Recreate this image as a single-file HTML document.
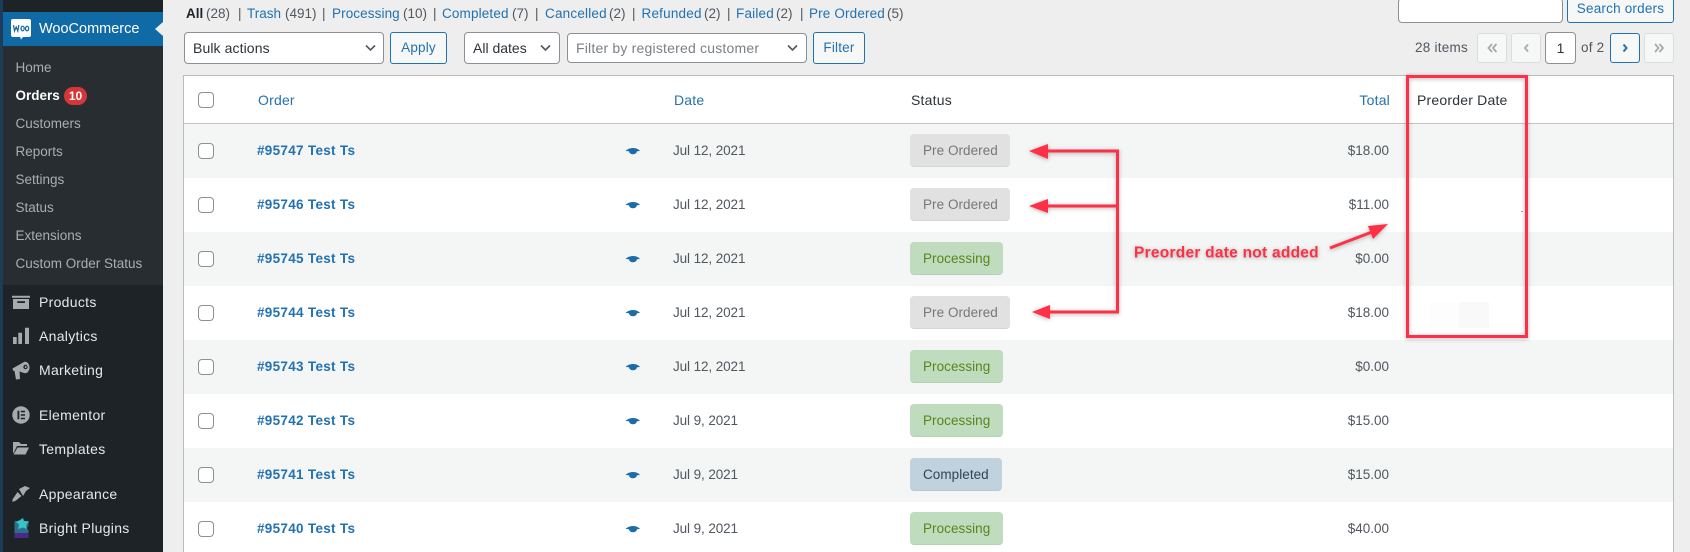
<!DOCTYPE html>
<html><head><meta charset="utf-8"><title>Orders</title>
<style>
html,body{margin:0;padding:0;width:1690px;height:552px;overflow:hidden;background:#eeeeee;font-family:"Liberation Sans",sans-serif;font-size:13.5px;color:#3c434a}
#p{position:relative;width:1690px;height:552px;overflow:hidden}
.a,.t,.r div,.r span,.r a,.r svg{position:absolute}
.a{position:absolute}
.t{position:absolute;line-height:20px;white-space:nowrap}
.l{color:#2271b1}
.g{color:#50575e}
.s{color:#a9aeb3;left:15.5px;position:absolute;line-height:20px;letter-spacing:0;white-space:nowrap}
.m{color:#e6e8e9;left:39px;position:absolute;line-height:20px;font-size:14px;letter-spacing:.3px;white-space:nowrap}
.r{position:absolute;left:184px;width:1489px;height:54px}
.r.o{background:#f4f5f5}.r.e{background:#fff}
.cb{left:14px;top:19px;width:14px;height:14px;border:1px solid #8c8f94;border-radius:4px;background:#fff}
.id{left:73px;top:17px;line-height:20px;font-weight:bold;color:#2271b1;letter-spacing:.3px;white-space:nowrap}
.d{left:489px;top:17px;line-height:20px;color:#50575e;letter-spacing:-.1px;white-space:nowrap}
.am{right:284px;top:17px;line-height:20px;color:#50575e;letter-spacing:0;white-space:nowrap}
.pill{left:726px;top:10px;height:33px;border-radius:4px;line-height:33px;padding-left:13px;box-sizing:border-box;white-space:nowrap;letter-spacing:.05px;border-bottom:1px solid rgba(0,0,0,.05)}
.pre{width:100px;background:#e1e1e1;color:#777}
.pro{width:93px;background:#c0dcbf;color:#5b841b}
.com{width:92px;background:#c0d2de;color:#2e4453}
.btn{position:absolute;box-sizing:border-box;border:1px solid #2271b1;border-radius:3px;background:#f6f7f7;color:#2271b1;text-align:center;letter-spacing:.2px}
.sel{position:absolute;box-sizing:border-box;border:1px solid #8c8f94;border-radius:4px;background:#fff;color:#2c3338;padding-left:8px;line-height:30px;font-size:14px;letter-spacing:.1px}
.pg{position:absolute;box-sizing:border-box;top:33px;height:30px;border:1px solid #dcdcde;border-radius:3px;background:#f6f7f7}
.h{top:90px;font-size:14px;letter-spacing:.2px}
</style></head><body><div id="p">

<div class="a" style="left:0;top:0;width:3px;height:552px;background:#1c3d5a"></div>
<div class="a" style="left:3px;top:0;width:160px;height:552px;background:#1d2327"></div>
<div class="a" style="left:3px;top:46px;width:160px;height:239px;background:#282d31"></div>
<div class="a" style="left:3px;top:12px;width:160px;height:34px;background:#0f6aa6"></div>
<div class="a" style="left:155px;top:22px;width:0;height:0;border-top:7.5px solid transparent;border-bottom:7.5px solid transparent;border-right:8px solid #eeeeee"></div>

<svg class="a" style="left:0;top:0" width="163" height="552" viewBox="0 0 163 552">
<path d="M13 19h16a2 2 0 0 1 2 2v14a2 2 0 0 1-2 2h-6l-2 2.500-.8-2.500H13a2 2 0 0 1-2-2V21a2 2 0 0 1 2-2z" fill="#fff"/>
<path d="M13.500 25l1 6 1.700-4 1.600 4 1-6M21 28.500a1.600 2.300 0 1 0 3.200 0a1.600 2.300 0 1 0-3.200 0M25.500 28.500a1.600 2.300 0 1 0 3.200 0a1.600 2.300 0 1 0-3.200 0" fill="none" stroke="#0f6aa6" stroke-width="1.200"/>
<path d="M12 295.700h18v2H12z" fill="#a7aaad"/><path d="M13 299h16v10H13z" fill="#a7aaad"/><path d="M17.300 301.200h7.700v1.800h-7.700z" fill="#1d2327"/>
<path d="M13 337h3.700v7H13zM18.300 332.700H22V344h-3.700zM25 327.700h4V344h-4z" fill="#a7aaad"/>
<path d="M12.500 368.500l11.500-6.500c3-1 5.500 2 5.500 5.500s-2.500 6.500-5.500 5.500l-4.500-1.500.5 7.500-4 .5-1.500-8.500-1.500-.5z" fill="#a7aaad"/><circle cx="25.500" cy="367" r="2.200" fill="#1d2327"/><circle cx="25.700" cy="367" r="1" fill="#a7aaad"/>
<circle cx="21" cy="415" r="8.700" fill="#a7aaad"/><path d="M17.500 410.700h1.800v8.600h-1.800zM20.800 410.700h4.200v1.600h-4.200zM20.800 414.200h4.200v1.600h-4.200zM20.800 417.700h4.200v1.600h-4.200z" fill="#1d2327"/>
<path d="M13 442h6l2 2h6v2H17l-3.500 7H13z" fill="#a7aaad"/><path d="M17.500 447.500H29l-3.500 7H13.500z" fill="#a7aaad"/>
<path d="M19 489l6-3 5 2-4 3-3 5z" fill="#a7aaad"/><path d="M17.500 492l4 4-5.500 4.500-3.500 1.500 0-2.500z" fill="#a7aaad"/>
<path d="M14.500 521h14v5l-2 2 2 2v7l-14 0z" fill="#2d6e8e"/><path d="M14.500 533h14v5h-14z" fill="#4b2a87"/><path d="M20 520l3-2 1 3 5 .5-3 3.500 1 4-4-1.500-5 1.500 1-4.500-3-2.500z" fill="#36c5c5"/>
</svg>

<div class="t" style="left:39px;top:19px;color:#fff;font-size:14.5px;letter-spacing:0">WooCommerce</div>
<div class="s" style="top:58px">Home</div>
<div class="s" style="top:86px;color:#fff;font-weight:bold;letter-spacing:0">Orders</div>
<div class="a" style="left:64px;top:87px;width:23px;height:18px;border-radius:9px;background:#d63638;color:#fff;font-size:12px;font-weight:bold;text-align:center;line-height:18px">10</div>
<div class="s" style="top:114px">Customers</div>
<div class="s" style="top:142px">Reports</div>
<div class="s" style="top:170px">Settings</div>
<div class="s" style="top:198px">Status</div>
<div class="s" style="top:226px">Extensions</div>
<div class="s" style="top:254px">Custom Order Status</div>
<div class="m" style="top:292px">Products</div>
<div class="m" style="top:326px">Analytics</div>
<div class="m" style="top:360px">Marketing</div>
<div class="m" style="top:405px">Elementor</div>
<div class="m" style="top:439px">Templates</div>
<div class="m" style="top:484px">Appearance</div>
<div class="m" style="top:518px">Bright Plugins</div>

<div class="t" style="left:186px;top:4px;color:#1d2327;font-weight:bold;">All</div><div class="t g" style="left:206px;top:4px">(28)</div>
<div class="t g" style="left:238px;top:4px">|</div>
<div class="t l" style="left:247px;top:4px">Trash</div><div class="t g" style="left:285px;top:4px">(491)</div>
<div class="t g" style="left:322px;top:4px">|</div>
<div class="t l" style="left:332px;top:4px;letter-spacing:.1px">Processing</div><div class="t g" style="left:403px;top:4px">(10)</div>
<div class="t g" style="left:433px;top:4px">|</div>
<div class="t l" style="left:442px;top:4px;letter-spacing:.15px">Completed</div><div class="t g" style="left:512px;top:4px">(7)</div>
<div class="t g" style="left:535px;top:4px">|</div>
<div class="t l" style="left:545px;top:4px;letter-spacing:.2px">Cancelled</div><div class="t g" style="left:609px;top:4px">(2)</div>
<div class="t g" style="left:632px;top:4px">|</div>
<div class="t l" style="left:641.500px;top:4px;letter-spacing:.2px">Refunded</div><div class="t g" style="left:704px;top:4px">(2)</div>
<div class="t g" style="left:727px;top:4px">|</div>
<div class="t l" style="left:736px;top:4px;letter-spacing:.2px">Failed</div><div class="t g" style="left:776px;top:4px">(2)</div>
<div class="t g" style="left:800px;top:4px">|</div>
<div class="t l" style="left:809px;top:4px;letter-spacing:.15px">Pre Ordered</div><div class="t g" style="left:887px;top:4px">(5)</div>

<div class="sel" style="left:184px;top:32px;width:200px;height:32px">Bulk actions</div>
<div class="btn" style="left:390px;top:32px;width:57px;height:32px;line-height:30px">Apply</div>
<div class="sel" style="left:464px;top:32px;width:96px;height:32px;letter-spacing:0">All dates</div>
<div class="sel" style="left:567px;top:33px;width:240px;height:30px;line-height:28px;color:#7b8085;border-color:#8c8f94;letter-spacing:.2px">Filter by registered customer</div>
<div class="btn" style="left:813px;top:32px;width:52px;height:32px;line-height:30px">Filter</div>
<svg class="a" style="left:0;top:0" width="900" height="70" viewBox="0 0 900 70" fill="none" stroke="#50575e" stroke-width="1.600">
<path d="M366 45.500l4.500 4.500 4.500-4.500M541 45.500l4.500 4.500 4.500-4.500M788 45.500l4.500 4.500 4.500-4.500"/>
</svg>

<div class="a" style="left:1398px;top:-2px;width:165px;height:25px;box-sizing:border-box;background:#fff;border:1px solid #8c8f94;border-radius:4px"></div>
<div class="btn" style="left:1567px;top:-2px;width:107px;height:25px;line-height:20px">Search orders</div>

<div class="t g" style="left:1415px;top:38px;letter-spacing:.25px">28 items</div>
<div class="pg" style="left:1477px;width:30px"></div>
<div class="pg" style="left:1511px;width:30px"></div>
<div class="a" style="left:1545px;top:32px;width:31px;height:32px;box-sizing:border-box;border:1px solid #8c8f94;border-radius:4px;background:#fff;text-align:center;line-height:30px;color:#2c3338;font-size:14px">1</div>
<div class="t g" style="left:1581px;top:38px;letter-spacing:.2px">of 2</div>
<div class="pg" style="left:1610px;width:30px;border-color:#2271b1"></div>
<div class="pg" style="left:1644px;width:30px"></div>
<svg class="a" style="left:0;top:0" width="1690" height="70" viewBox="0 0 1690 70" fill="none" stroke="#a7aaad" stroke-width="1.800">
<path d="M1492 44l-3.500 4 3.500 4M1496.500 44l-3.500 4 3.500 4M1528 44.500l-3 3.500 3 3.500M1655 44l3.500 4-3.500 4M1659.500 44l3.500 4-3.500 4"/>
<path d="M1623.500 44.500l3 3.500-3 3.500" stroke="#2271b1" stroke-width="2"/>
</svg>

<div class="a" style="left:183px;top:75px;width:1491px;height:500px;box-sizing:border-box;background:#fff;border:1px solid #bbbcbe"></div>
<div class="a" style="left:184px;top:123px;width:1489px;height:1px;background:#c3c4c7"></div>
<div class="a" style="left:198px;top:92px;width:14px;height:14px;border:1px solid #8c8f94;border-radius:4px;background:#fff"></div>
<div class="t l h" style="left:258px">Order</div>
<div class="t l h" style="left:674px">Date</div>
<div class="t h" style="left:911px;color:#2c3338">Status</div>
<div class="t l h" style="right:300px">Total</div>
<div class="t h" style="left:1417px;color:#2c3338">Preorder Date</div>

<div class="r o" style="top:124px"><div class="cb"></div><a class="id">#95747 Test Ts</a><div class="d">Jul 12, 2021</div><div class="pill pre">Pre Ordered</div><div class="am">$18.00</div></div>
<div class="r e" style="top:178px"><div class="cb"></div><a class="id">#95746 Test Ts</a><div class="d">Jul 12, 2021</div><div class="pill pre">Pre Ordered</div><div class="am">$11.00</div></div>
<div class="r o" style="top:232px"><div class="cb"></div><a class="id">#95745 Test Ts</a><div class="d">Jul 12, 2021</div><div class="pill pro">Processing</div><div class="am">$0.00</div></div>
<div class="r e" style="top:286px"><div class="cb"></div><a class="id">#95744 Test Ts</a><div class="d">Jul 12, 2021</div><div class="pill pre">Pre Ordered</div><div class="am">$18.00</div></div>
<div class="r o" style="top:340px"><div class="cb"></div><a class="id">#95743 Test Ts</a><div class="d">Jul 12, 2021</div><div class="pill pro">Processing</div><div class="am">$0.00</div></div>
<div class="r e" style="top:394px"><div class="cb"></div><a class="id">#95742 Test Ts</a><div class="d">Jul 9, 2021</div><div class="pill pro">Processing</div><div class="am">$15.00</div></div>
<div class="r o" style="top:448px"><div class="cb"></div><a class="id">#95741 Test Ts</a><div class="d">Jul 9, 2021</div><div class="pill com">Completed</div><div class="am">$15.00</div></div>
<div class="r e" style="top:502px"><div class="cb"></div><a class="id">#95740 Test Ts</a><div class="d">Jul 9, 2021</div><div class="pill pro">Processing</div><div class="am">$40.00</div></div>

<div class="a" style="left:1429px;top:302px;width:30px;height:26px;background:#fdfdfd"></div>
<div class="a" style="left:1459px;top:302px;width:30px;height:26px;background:#f9f9f9"></div>
<div class="a" style="left:1521px;top:211px;width:2px;height:1px;background:#aaa"></div>

<svg class="a" style="left:0;top:0" width="1690" height="552" viewBox="0 0 1690 552">
<g fill="#1b6ca8">
<path d="M625.500 151c3.500-3.500 10.500-4.500 14.500 0l-3 .2c-.4 2-2 3-4 3s-3.600-1-4-3z"/>
<path d="M625.500 205c3.500-3.500 10.500-4.500 14.500 0l-3 .2c-.4 2-2 3-4 3s-3.600-1-4-3z"/>
<path d="M625.500 259c3.500-3.500 10.500-4.500 14.500 0l-3 .2c-.4 2-2 3-4 3s-3.600-1-4-3z"/>
<path d="M625.500 313c3.500-3.500 10.500-4.500 14.500 0l-3 .2c-.4 2-2 3-4 3s-3.600-1-4-3z"/>
<path d="M625.500 367c3.500-3.500 10.500-4.500 14.500 0l-3 .2c-.4 2-2 3-4 3s-3.600-1-4-3z"/>
<path d="M625.500 421c3.500-3.500 10.500-4.500 14.500 0l-3 .2c-.4 2-2 3-4 3s-3.600-1-4-3z"/>
<path d="M625.500 475c3.500-3.500 10.500-4.500 14.500 0l-3 .2c-.4 2-2 3-4 3s-3.600-1-4-3z"/>
<path d="M625.500 529c3.500-3.500 10.500-4.500 14.500 0l-3 .2c-.4 2-2 3-4 3s-3.600-1-4-3z"/>
</g>
<g style="filter:drop-shadow(0 1px 2px rgba(0,0,0,.3))">
<rect x="1407.500" y="76.500" width="119" height="260" fill="none" stroke="#ff2f45" stroke-width="3"/>
<path d="M1045 151H1117.500V312H1045M1045 206H1117.500M1330 248L1372 232" fill="none" stroke="#ff2f45" stroke-width="3"/>
<path d="M1029 151l19-7v15zM1029 206l19-7v14zM1032 312l18-7v14zM1388 224l-20 2 5 13z" fill="#ff2f45"/>
<text x="1134" y="257.500" font-family="Liberation Sans" font-size="15.500" font-weight="bold" fill="#ff2f45" letter-spacing=".25">Preorder date not added</text>
</g>
</svg>
</div></body></html>
